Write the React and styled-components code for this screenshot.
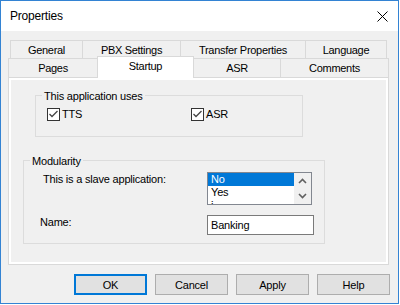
import React from 'react';
import styled, { createGlobalStyle, css } from 'styled-components';

const Global = createGlobalStyle`
  *, *::before, *::after { box-sizing: border-box; }
  html, body { margin: 0; padding: 0; background: #ffffff; }
  body {
    font-family: "Liberation Sans", Arial, sans-serif;
    font-size: 11px;
    color: #000;
  }
`;

const Window = styled.div`
  width: 399px;
  height: 304px;
  border: 1px solid #3383d3;
  background: #f0f0f0;
  display: flex;
  flex-direction: column;
`;

const TitleBar = styled.div`
  flex: none;
  height: 30px;
  background: #fff;
  display: flex;
  align-items: center;
  justify-content: space-between;
  padding: 0 10px 0 9px;
  font-size: 12px;
  letter-spacing: -0.2px;
`;

const CloseIcon = styled.svg`
  display: block;
  width: 11px;
  height: 11px;
`;

const Body = styled.div`
  flex: 1;
  display: flex;
  flex-direction: column;
  align-items: flex-start;
  padding: 9px 0 0 7px;
`;

const TabRow = styled.div`
  display: flex;
  height: ${p => p.$h}px;
  padding-left: ${p => p.$indent}px;
`;

const Tab = styled.div`
  flex: none;
  width: ${p => p.$w}px;
  margin-left: -1px;
  &:first-child { margin-left: 0; }
  border: 1px solid #d9d9d9;
  border-bottom: none;
  background: #f0f0f0;
  text-align: center;
  padding-top: 2px;
  line-height: 15px;
  letter-spacing: -0.3px;
  white-space: nowrap;
  ${p => p.$active && css`
    position: relative;
    z-index: 1;
    align-self: flex-start;
    margin-top: -2px;
    height: 22px;
    background: #fff;
  `}
`;

const Panel = styled.div`
  width: 381px;
  height: 188px;
  border: 1px solid #d9d9d9;
  box-shadow: inset 0 0 0 2px #fff;
  display: flex;
  flex-direction: column;
  align-items: flex-start;
`;

const GroupBox = styled.div`
  margin: ${p => p.$top}px 0 0 ${p => p.$left}px;
  width: ${p => p.$w}px;
  height: ${p => p.$h}px;
  border: 1px solid #dcdcdc;
  display: flex;
  flex-direction: column;
  align-items: flex-start;
`;

const GroupLabel = styled.div`
  margin: -6px 0 0 6px;
  padding: 0 2px;
  background: #f0f0f0;
  line-height: 13px;
  letter-spacing: -0.2px;
  white-space: nowrap;
`;

const CheckRow = styled.div`
  margin-top: 5px;
  padding-left: 11px;
  display: grid;
  grid-template-columns: 144px auto;
`;

const CheckItem = styled.label`
  display: flex;
  align-items: center;
  gap: 2px;
  line-height: 13px;
  letter-spacing: -0.2px;
`;

const CheckBox = styled.span`
  flex: none;
  width: 13px;
  height: 13px;
  border: 1px solid #333;
  background: #fff;
  display: block;
  position: relative;
`;

const CheckMark = styled.svg`
  display: block;
  width: 11px;
  height: 11px;
`;

const FormGrid = styled.div`
  margin: 4px 0 0 16px;
  display: grid;
  grid-template-columns: 167px auto;
  row-gap: 10px;
  align-items: start;
`;

const FieldLabel = styled.div`
  padding: 1px 0 0 ${p => p.$indent || 0}px;
  line-height: 13px;
  letter-spacing: -0.2px;
  white-space: nowrap;
`;

const ListBox = styled.div`
  width: 105px;
  height: 33px;
  border: 1px solid #828790;
  background: #fff;
  display: flex;
  overflow: hidden;
`;

const ListItems = styled.div`
  flex: 1;
  display: flex;
  flex-direction: column;
`;

const ListItem = styled.div`
  flex: none;
  height: 13px;
  line-height: 13px;
  padding-left: 3px;
  letter-spacing: -0.2px;
  background: ${p => (p.$selected ? '#0078d7' : 'transparent')};
  color: ${p => (p.$selected ? '#fff' : '#000')};
`;

const ScrollBar = styled.div`
  flex: none;
  width: 17px;
  background: #f0f0f0;
  display: flex;
  flex-direction: column;
  padding-top: 0.5px;
`;

const ScrollArrow = styled.div`
  height: 15px;
  display: flex;
  align-items: center;
  justify-content: center;
`;

const TextBox = styled.div`
  width: 107px;
  height: 20px;
  border: 1px solid #7a7a7a;
  background: #fff;
  padding-left: 3px;
  line-height: 18px;
  letter-spacing: -0.2px;
`;

const ButtonRow = styled.div`
  margin-top: 9px;
  width: 382px;
  display: flex;
  justify-content: flex-end;
  gap: 8px;
`;

const Button = styled.button`
  width: 73px;
  height: 21px;
  margin: 0;
  padding: 0;
  font: inherit;
  letter-spacing: -0.2px;
  color: #000;
  background: #e1e1e1;
  border: ${p => (p.$default ? '2px solid #0078d7' : '1px solid #adadad')};
  display: flex;
  align-items: center;
  justify-content: center;
`;

const Chevron = ({ down }) => (
  <svg width="9" height="6" viewBox="0 0 9 6">
    <polyline
      points={down ? '1,1 4.5,4.5 8,1' : '1,5 4.5,1.5 8,5'}
      fill="none"
      stroke="#606060"
      strokeWidth="1.6"
    />
  </svg>
);

const Check = ({ label }) => (
  <CheckItem>
    <CheckBox>
      <CheckMark viewBox="0 0 11 11">
        <polyline points="1.5,5 4,7.5 9.5,2" fill="none" stroke="#444" strokeWidth="1.3" />
      </CheckMark>
    </CheckBox>
    {label}
  </CheckItem>
);

const row1 = [
  ['General', 73],
  ['PBX Settings', 99],
  ['Transfer Properties', 126],
  ['Language', 82],
];
const row2 = [
  ['Pages', 90],
  ['Startup', 97, true],
  ['ASR', 88],
  ['Comments', 109],
];

export default function App() {
  return (
    <>
      <Global />
      <Window>
        <TitleBar>
          <span>Properties</span>
          <CloseIcon viewBox="0 0 11 11">
            <path d="M0.5 0.5 L10.5 10.5 M10.5 0.5 L0.5 10.5" stroke="#000" strokeWidth="1" fill="none" />
          </CloseIcon>
        </TitleBar>
        <Body>
          <TabRow $h={18} $indent={2}>
            {row1.map(([t, w]) => (
              <Tab key={t} $w={w}>{t}</Tab>
            ))}
          </TabRow>
          <TabRow $h={19} $indent={0}>
            {row2.map(([t, w, a]) => (
              <Tab key={t} $w={w} $active={a}>{t}</Tab>
            ))}
          </TabRow>
          <Panel>
            <GroupBox $top={17} $left={26} $w={268} $h={42}>
              <GroupLabel>This application uses</GroupLabel>
              <CheckRow>
                <Check label="TTS" />
                <Check label="ASR" />
              </CheckRow>
            </GroupBox>
            <GroupBox $top={23} $left={14} $w={302} $h={84}>
              <GroupLabel>Modularity</GroupLabel>
              <FormGrid>
                <FieldLabel $indent={3}>This is a slave application:</FieldLabel>
                <ListBox>
                  <ListItems>
                    <ListItem $selected>No</ListItem>
                    <ListItem>Yes</ListItem>
                    <ListItem>i</ListItem>
                  </ListItems>
                  <ScrollBar>
                    <ScrollArrow><Chevron /></ScrollArrow>
                    <ScrollArrow><Chevron down /></ScrollArrow>
                  </ScrollBar>
                </ListBox>
                <FieldLabel>Name:</FieldLabel>
                <TextBox>Banking</TextBox>
              </FormGrid>
            </GroupBox>
          </Panel>
          <ButtonRow>
            <Button $default>OK</Button>
            <Button>Cancel</Button>
            <Button>Apply</Button>
            <Button>Help</Button>
          </ButtonRow>
        </Body>
      </Window>
    </>
  );
}
